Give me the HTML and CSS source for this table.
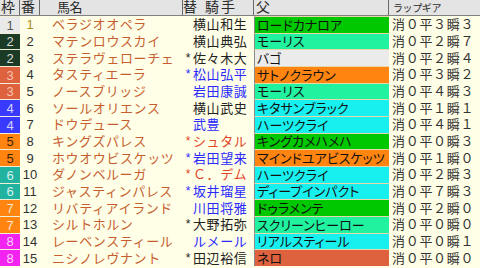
FILE: index.html
```html
<!DOCTYPE html>
<html lang="ja">
<head>
<meta charset="utf-8">
<title>出走表</title>
<link rel="stylesheet" href="styles.css">
</head>
<body>
<div class="sheet">
  <div class="head">
    <div class="h h-waku">枠</div>
    <div class="h h-ban">番</div>
    <div class="h h-name">馬名</div>
    <div class="h h-jockey"><span class="h-kae">替</span>騎手</div>
    <div class="h h-sire">父</div>
    <div class="h h-gear">ラップギア</div>
  </div>

  <div class="row"><div class="waku w1">1</div><div class="ban ban-first">1</div><div class="name">ベラジオオペラ</div><div class="mark"></div><div class="jockey">横山和生</div><div class="sire s-green">ロードカナロア</div><div class="gear">消０平３瞬３</div></div>
  <div class="row"><div class="waku w2">2</div><div class="ban">2</div><div class="name">マテンロウスカイ</div><div class="mark"></div><div class="jockey">横山典弘</div><div class="sire s-spring">モーリス</div><div class="gear">消０平２瞬７</div></div>
  <div class="row"><div class="waku w2">2</div><div class="ban">3</div><div class="name">ステラヴェローチェ</div><div class="mark">*</div><div class="jockey">佐々木大</div><div class="sire s-grey">バゴ</div><div class="gear">消０平２瞬４</div></div>
  <div class="row j-blue"><div class="waku w3">3</div><div class="ban">4</div><div class="name">タスティエーラ</div><div class="mark">*</div><div class="jockey">松山弘平</div><div class="sire s-orange">サトノクラウン</div><div class="gear">消０平３瞬２</div></div>
  <div class="row j-blue"><div class="waku w3">3</div><div class="ban">5</div><div class="name">ノースブリッジ</div><div class="mark"></div><div class="jockey">岩田康誠</div><div class="sire s-spring">モーリス</div><div class="gear">消０平４瞬３</div></div>
  <div class="row"><div class="waku w4">4</div><div class="ban">6</div><div class="name">ソールオリエンス</div><div class="mark"></div><div class="jockey">横山武史</div><div class="sire s-cyan">キタサンブラック</div><div class="gear">消０平１瞬１</div></div>
  <div class="row j-blue"><div class="waku w4">4</div><div class="ban">7</div><div class="name">ドウデュース</div><div class="mark"></div><div class="jockey">武豊</div><div class="sire s-cyan">ハーツクライ</div><div class="gear">消０平４瞬１</div></div>
  <div class="row j-red"><div class="waku w5">5</div><div class="ban">8</div><div class="name">キングズパレス</div><div class="mark">*</div><div class="jockey">シュタル</div><div class="sire s-green">キングカメハメハ</div><div class="gear">消０平０瞬３</div></div>
  <div class="row j-blue"><div class="waku w5">5</div><div class="ban">9</div><div class="name">ホウオウビスケッツ</div><div class="mark">*</div><div class="jockey">岩田望来</div><div class="sire s-orange">マインドユアビスケッツ</div><div class="gear">消０平１瞬０</div></div>
  <div class="row j-red"><div class="waku w6">6</div><div class="ban">10</div><div class="name">ダノンベルーガ</div><div class="mark">*</div><div class="jockey">Ｃ．デム</div><div class="sire s-cyan">ハーツクライ</div><div class="gear">消０平２瞬３</div></div>
  <div class="row j-blue"><div class="waku w6">6</div><div class="ban">11</div><div class="name">ジャスティンパレス</div><div class="mark">*</div><div class="jockey">坂井瑠星</div><div class="sire s-cyan">ディープインパクト</div><div class="gear">消０平７瞬３</div></div>
  <div class="row j-blue"><div class="waku w7">7</div><div class="ban">12</div><div class="name">リバティアイランド</div><div class="mark"></div><div class="jockey">川田将雅</div><div class="sire s-green">ドゥラメンテ</div><div class="gear">消０平２瞬０</div></div>
  <div class="row"><div class="waku w7">7</div><div class="ban">13</div><div class="name">シルトホルン</div><div class="mark">*</div><div class="jockey">大野拓弥</div><div class="sire s-spring">スクリーンヒーロー</div><div class="gear">消０平０瞬０</div></div>
  <div class="row j-blue"><div class="waku w8">8</div><div class="ban">14</div><div class="name">レーベンスティール</div><div class="mark"></div><div class="jockey">ルメール</div><div class="sire s-cyan">リアルスティール</div><div class="gear">消０平０瞬１</div></div>
  <div class="row"><div class="waku w8">8</div><div class="ban">15</div><div class="name">ニシノレヴナント</div><div class="mark">*</div><div class="jockey">田辺裕信</div><div class="sire s-red">ネロ</div><div class="gear">消０平０瞬０</div></div>
</div>
</body>
</html>
```

FILE: styles.css
```css
html, body {
  margin: 0;
  padding: 0;
  background: #fffee6;
}

body {
  font-family: "Liberation Sans", "Noto Sans CJK JP", sans-serif;
  color: #222;
}

.sheet {
  width: 480px;
  height: 268px;
  overflow: hidden;
  background: #fffee6;
}

.head,
.row {
  display: grid;
  grid-template-columns: 20px 20px 143px 10px 61px 135px 91px;
}

/* header */
.head {
  height: 16px;
  box-sizing: border-box;
  background: #e4e4e4;
  border-bottom: 1px solid #808080;
}

.h {
  box-sizing: border-box;
  border-right: 1px solid #6a6a6a;
  display: flex;
  align-items: center;
  line-height: 15px;
  color: #2a2a2a;
  white-space: nowrap;
  overflow: hidden;
}

.h-waku {
  font-size: 14px;
  padding-left: 1px;
}

.h-ban {
  font-size: 14px;
  padding-left: 1px;
}

.h-name {
  font-size: 13px;
  padding-left: 17px;
  letter-spacing: -0.5px;
}

.h-jockey {
  grid-column: span 2;
  font-size: 14px;
  letter-spacing: 2px;
}

.h-kae {
  margin-right: 6px;
}

.h-sire {
  font-size: 14px;
  padding-left: 2px;
}

.h-gear {
  font-size: 10px;
  padding-left: 4px;
  padding-top: 2px;
  letter-spacing: -0.4px;
  border-right: none;
}

/* body rows */
.row {
  height: 16.667px;
  font-size: 13px;
}

.row > div {
  box-sizing: border-box;
  display: flex;
  align-items: center;
  white-space: nowrap;
  overflow: hidden;
  line-height: 15px;
  padding-top: 1px;
}

.waku {
  justify-content: center;
  border-top: 1px solid #f4eed6;
}

.w1 { background: #eaeaea; color: #555; }
.w2 { background: #1c3b27; color: #dcdcdc; }
.w3 { background: #df623e; color: #f6c2b0; }
.w4 { background: #3a3aff; color: #d4d4ff; }
.w5 { background: #ff8410; color: #3a2408; }
.w6 { background: #22b3a0; color: #d6f2ec; }
.w7 { background: #ff8410; color: #f6e4cc; }
.w8 { background: #f222f0; color: #ffd2ff; }

.ban {
  justify-content: center;
  color: #333;
}

.ban-first {
  color: #a88a2a;
}

.name {
  padding-left: 12px;
  color: #c65e30;
  letter-spacing: 0.6px;
}

.mark {
  justify-content: center;
  font-size: 12px;
  color: #222;
  overflow: visible;
}

.jockey {
  letter-spacing: 0.6px;
  color: #222;
}

.j-blue .mark,
.j-blue .jockey {
  color: #2a2aff;
}

.j-red .mark,
.j-red .jockey {
  color: #e2462a;
}

.sire {
  border-left: 1px solid #8a8a8a;
  border-top: 1px solid #e6d8a8;
  padding-left: 2px;
  color: #111;
  font-feature-settings: "palt";
  letter-spacing: 0;
}

.s-green { background: #00c800; }
.s-spring { background: #20f2a0; }
.s-grey { background: #ebebeb; }
.s-orange { background: #ff8410; }
.s-cyan { background: #18f0f0; }
.s-red { background: #df623e; }

.gear {
  padding-left: 3px;
  letter-spacing: 0.7px;
  color: #333;
}
```
